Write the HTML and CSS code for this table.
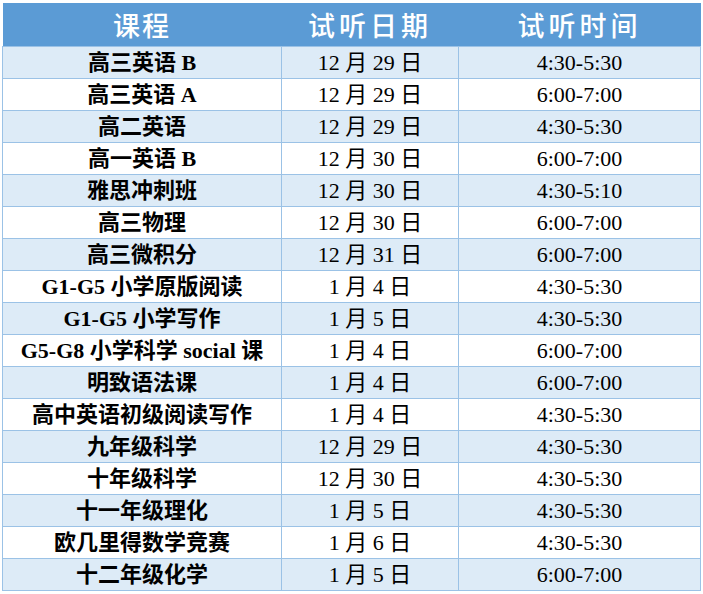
FILE: index.html
```html
<!DOCTYPE html>
<html lang="zh-CN">
<head>
<meta charset="utf-8">
<title>试听课程</title>
<link rel="stylesheet" href="styles.css">
</head>
<body>
<table class="schedule">
  <colgroup>
    <col class="c1"><col class="c2"><col class="c3">
  </colgroup>
  <thead>
    <tr><th>课程</th><th class="wide">试听日期</th><th class="wide">试听时间</th></tr>
  </thead>
  <tbody>
    <tr><td class="name">高三英语 B</td><td>12 月 29 日</td><td>4:30-5:30</td></tr>
    <tr><td class="name">高三英语 A</td><td>12 月 29 日</td><td>6:00-7:00</td></tr>
    <tr><td class="name">高二英语</td><td>12 月 29 日</td><td>4:30-5:30</td></tr>
    <tr><td class="name">高一英语 B</td><td>12 月 30 日</td><td>6:00-7:00</td></tr>
    <tr><td class="name">雅思冲刺班</td><td>12 月 30 日</td><td>4:30-5:10</td></tr>
    <tr><td class="name">高三物理</td><td>12 月 30 日</td><td>6:00-7:00</td></tr>
    <tr><td class="name">高三微积分</td><td>12 月 31 日</td><td>6:00-7:00</td></tr>
    <tr><td class="name">G1-G5 小学原版阅读</td><td>1 月 4 日</td><td>4:30-5:30</td></tr>
    <tr><td class="name">G1-G5 小学写作</td><td>1 月 5 日</td><td>4:30-5:30</td></tr>
    <tr><td class="name">G5-G8 小学科学 social 课</td><td>1 月 4 日</td><td>6:00-7:00</td></tr>
    <tr><td class="name">明致语法课</td><td>1 月 4 日</td><td>6:00-7:00</td></tr>
    <tr><td class="name">高中英语初级阅读写作</td><td>1 月 4 日</td><td>4:30-5:30</td></tr>
    <tr><td class="name">九年级科学</td><td>12 月 29 日</td><td>4:30-5:30</td></tr>
    <tr><td class="name">十年级科学</td><td>12 月 30 日</td><td>4:30-5:30</td></tr>
    <tr><td class="name">十一年级理化</td><td>1 月 5 日</td><td>4:30-5:30</td></tr>
    <tr><td class="name">欧几里得数学竞赛</td><td>1 月 6 日</td><td>4:30-5:30</td></tr>
    <tr><td class="name">十二年级化学</td><td>1 月 5 日</td><td>6:00-7:00</td></tr>
  </tbody>
</table>
</body>
</html>
```
FILE: styles.css
```css
html, body {
  margin: 0;
  padding: 0;
  background: #ffffff;
}

body {
  padding: 3px 0 0 2px;
}

.schedule {
  border-collapse: collapse;
  table-layout: fixed;
  width: 698px;
  font-family: "Liberation Serif", "Noto Sans CJK SC", serif;
  font-size: 22px;
  color: #000000;
}

.c1 { width: 279px; }
.c2 { width: 177px; }
.c3 { width: 242px; }

.schedule th {
  height: 43px;
  padding: 0;
  background: #5b9bd5;
  color: #ffffff;
  font-family: "Noto Sans CJK SC", sans-serif;
  font-weight: 500;
  font-size: 27px;
  line-height: 43px;
  letter-spacing: 2px;
  text-align: center;
  vertical-align: middle;
  border: none;
}

.schedule th.wide {
  letter-spacing: 4px;
}

.schedule td {
  height: 31px;
  padding: 0;
  border: 1px solid #9bc2e6;
  text-align: center;
  vertical-align: middle;
  line-height: 30px;
  white-space: nowrap;
}

.schedule tbody tr:nth-child(odd) td {
  background: #ddebf7;
}

.schedule td.name {
  font-weight: 700;
}
```
